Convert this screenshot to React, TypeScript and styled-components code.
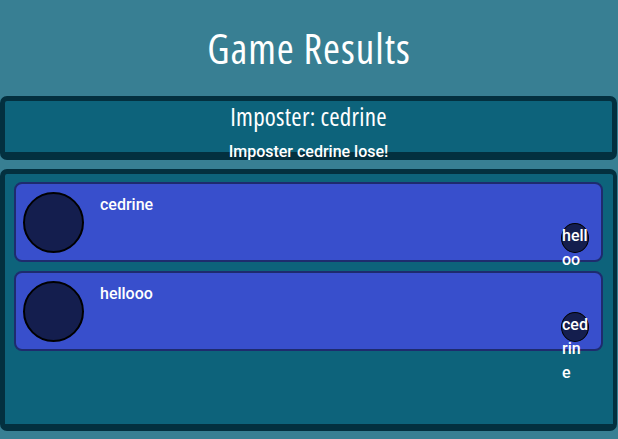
import React from "react";
import styled, { createGlobalStyle } from "styled-components";

const GlobalStyle = createGlobalStyle`
  html, body { margin: 0; padding: 0; }
  body { background: #387f93; font-family: Roboto, "Liberation Sans", sans-serif; }
`;

const Page = styled.div`
  display: flex;
  flex-direction: column;
  height: 100vh;
  box-sizing: border-box;
  padding-bottom: 8px;
  background: #387f93;
  color: #ffffff;
`;

const Title = styled.h1`
  margin: 0 0 24px;
  padding-top: 24px;
  font-family: "Open Sans", sans-serif;
  font-stretch: 75%;
  font-weight: 400;
  font-size: 41px;
  letter-spacing: 1px;
  line-height: 48px;
  text-align: center;
`;

const Panel = styled.section`
  background: #0d637b;
  border: 5px solid #03303f;
  border-bottom-width: 8px;
  border-radius: 7px;
  margin-right: 1px;
`;

const ImposterPanel = styled(Panel)`
  height: 51px;
  display: flex;
  flex-direction: column;
  align-items: center;
`;

const ImposterName = styled.h2`
  margin: 0;
  font-family: "Open Sans", sans-serif;
  font-stretch: 75%;
  font-weight: 400;
  font-size: 25px;
  letter-spacing: 0.25px;
  line-height: 30px;
`;

const Verdict = styled.p`
  margin: 11px 0 0;
  font-size: 16px;
  font-weight: 500;
  line-height: 19px;
`;

const PlayersPanel = styled(Panel)`
  flex: 1;
  margin-top: 9px;
  border-width: 5px 4px 7px 5px;
  padding: 8px 10px 8px 9px;
  display: flex;
  flex-direction: column;
  gap: 9px;
`;

const PlayerCard = styled.div`
  display: flex;
  align-items: center;
  height: 76px;
  padding: 0 12px 0 7px;
  background: #384fcc;
  border: 2px solid #1e2b6e;
  border-radius: 8px;
`;

const Avatar = styled.div`
  width: 57px;
  height: 57px;
  flex: none;
  border-radius: 50%;
  background: #141e4e;
  border: 2px solid #000;
`;

const PlayerName = styled.div`
  align-self: flex-start;
  margin: 11px 0 0 16px;
  font-size: 16px;
  font-weight: 500;
  line-height: 19px;
  flex: 1;
`;

const VoteBadge = styled.div`
  align-self: flex-end;
  margin-bottom: 7px;
  width: 26px;
  height: 28px;
  flex: none;
  border-radius: 50%;
  background: #141e4e;
  border: 1.5px solid #000;
  font-size: 16px;
  font-weight: 500;
  line-height: 24px;
  word-break: break-all;
  text-align: left;
`;

const players = [
  { name: "cedrine", vote: "hellooo" },
  { name: "hellooo", vote: "cedrine" },
];

export default function App() {
  return (
    <>
      <GlobalStyle />
      <Page>
        <Title>Game Results</Title>
        <ImposterPanel>
          <ImposterName>Imposter: cedrine</ImposterName>
          <Verdict>Imposter cedrine lose!</Verdict>
        </ImposterPanel>
        <PlayersPanel>
          {players.map((p) => (
            <PlayerCard key={p.name}>
              <Avatar />
              <PlayerName>{p.name}</PlayerName>
              <VoteBadge>{p.vote}</VoteBadge>
            </PlayerCard>
          ))}
        </PlayersPanel>
      </Page>
    </>
  );
}
